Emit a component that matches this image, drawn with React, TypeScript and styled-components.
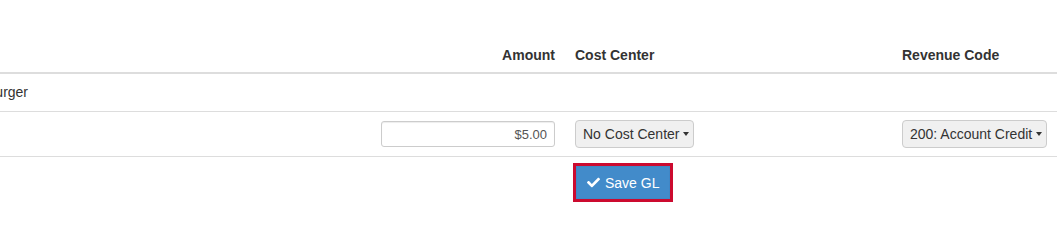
import React from "react";
import styled, { createGlobalStyle } from "styled-components";
import { FaCheck } from "react-icons/fa";

const GlobalStyle = createGlobalStyle`
  html, body {
    margin: 0;
    padding: 0;
    background: #fff;
  }
  body {
    font-family: "Liberation Sans", Arial, Helvetica, sans-serif;
    font-size: 14px;
    line-height: 21px;
    color: #333;
  }
`;

const Viewport = styled.div`
  width: 1057px;
  overflow: hidden;
  padding-top: 35px;
`;

const Table = styled.table`
  margin-left: -50px;
  width: 1124px;
  table-layout: fixed;
  border-collapse: collapse;
  border-spacing: 0;
`;

const HeadCell = styled.th<{ $align?: "left" | "right"; $padRight?: number }>`
  padding: 10px ${(p) => p.$padRight ?? 8}px 6px 8px;
  text-align: ${(p) => p.$align ?? "left"};
  font-weight: bold;
  vertical-align: bottom;
  border-bottom: 2px solid #ddd;
  white-space: nowrap;
`;

const Row = styled.tr<{ $last?: boolean }>`
  border-bottom: ${(p) => (p.$last ? "none" : "1px solid #ddd")};
`;

const Cell = styled.td<{ $align?: "left" | "right"; $padRight?: number; $padTop?: number }>`
  padding: ${(p) => p.$padTop ?? 8}px ${(p) => p.$padRight ?? 8}px 8px 8px;
  text-align: ${(p) => p.$align ?? "left"};
  vertical-align: middle;
  white-space: nowrap;
`;

const AmountInput = styled.input`
  display: inline-block;
  box-sizing: border-box;
  width: 174px;
  height: 26px;
  padding: 0 7px;
  border: 1px solid #ccc;
  border-radius: 3px;
  box-shadow: inset 0 1px 1px rgba(0, 0, 0, 0.075);
  font-family: inherit;
  font-size: 13px;
  color: #555;
  text-align: right;
  vertical-align: middle;
`;

const SelectButton = styled.button`
  display: inline-flex;
  align-items: center;
  box-sizing: border-box;
  height: 28px;
  padding: 0 4px 0 7px;
  border: 1px solid #ccc;
  border-radius: 4px;
  background: #f0f0f0;
  font-family: inherit;
  font-size: 14px;
  color: #333;
  vertical-align: middle;
  cursor: pointer;
`;

const Caret = styled.span`
  display: inline-block;
  width: 0;
  height: 0;
  margin-left: 4px;
  border-top: 4px solid #333;
  border-left: 3.5px solid transparent;
  border-right: 3.5px solid transparent;
`;

const SaveButton = styled.button`
  display: inline-flex;
  align-items: center;
  gap: 5px;
  box-sizing: border-box;
  height: 33px;
  margin-left: 1px;
  padding: 0 10px;
  border: 1px solid #3f87c6;
  border-radius: 0;
  background: #428bca;
  color: #fff;
  font-family: inherit;
  font-size: 14px;
  outline: 3px solid #cc0a2f;
  cursor: pointer;
`;

export default function App() {
  return (
    <>
      <GlobalStyle />
      <Viewport>
        <Table>
          <colgroup>
            <col style={{ width: 417 }} />
            <col style={{ width: 200 }} />
            <col style={{ width: 327 }} />
            <col style={{ width: 180 }} />
          </colgroup>
          <thead>
            <tr>
              <HeadCell />
              <HeadCell $align="right" $padRight={12}>
                Amount
              </HeadCell>
              <HeadCell>Cost Center</HeadCell>
              <HeadCell>Revenue Code</HeadCell>
            </tr>
          </thead>
          <tbody>
            <Row>
              <Cell colSpan={4}>Hamburger</Cell>
            </Row>
            <Row>
              <Cell />
              <Cell $align="right" $padRight={12}>
                <AmountInput defaultValue="$5.00" />
              </Cell>
              <Cell>
                <SelectButton>
                  No Cost Center
                  <Caret />
                </SelectButton>
              </Cell>
              <Cell>
                <SelectButton>
                  200: Account Credit
                  <Caret />
                </SelectButton>
              </Cell>
            </Row>
            <Row $last>
              <Cell />
              <Cell />
              <Cell $padTop={9}>
                <SaveButton>
                  <FaCheck size={13} />
                  Save GL
                </SaveButton>
              </Cell>
              <Cell />
            </Row>
          </tbody>
        </Table>
      </Viewport>
    </>
  );
}
